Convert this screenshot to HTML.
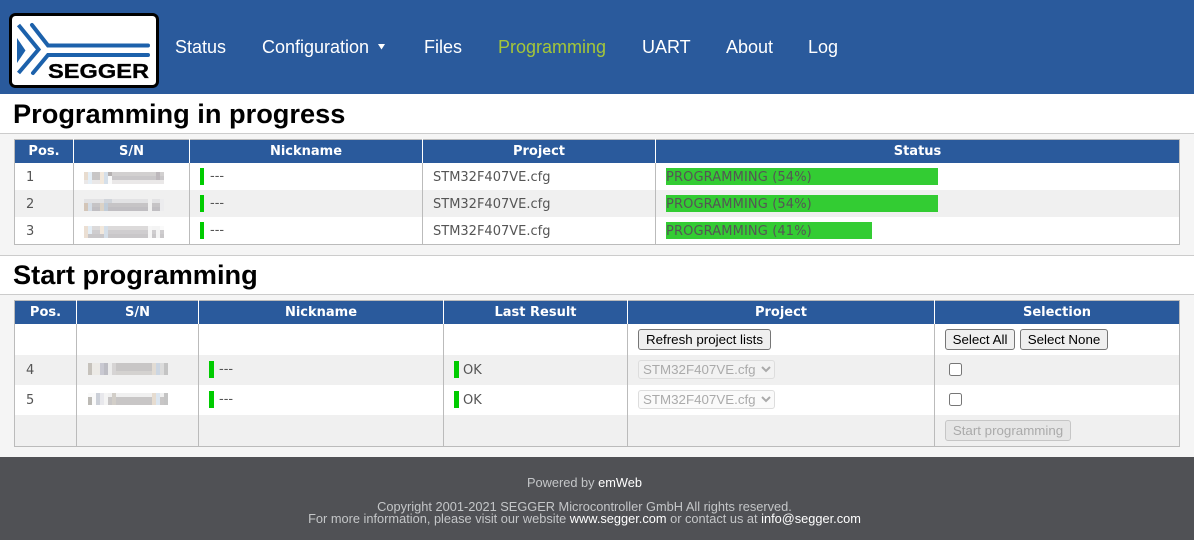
<!DOCTYPE html>
<html><head><meta charset="utf-8"><title>Programming</title>
<style>
html,body{margin:0;padding:0}
body{width:1194px;height:540px;position:relative;overflow:hidden;background:#f5f5f5;font-family:"Liberation Sans",sans-serif}
.a{position:absolute}
#hdr{left:0;top:0;width:1194px;height:94px;background:#2a5a9c}
.nav{position:absolute;top:37px;font-size:18px;line-height:20px;color:#fff;white-space:nowrap}
.band{position:absolute;left:0;width:1194px;background:#fff;border-bottom:1px solid #ccc;box-sizing:content-box}
h1{position:absolute;left:13px;margin:0;font-size:27.2px;line-height:32px;color:#000;font-weight:bold;white-space:nowrap}
table{position:absolute;left:14px;border-collapse:collapse;table-layout:fixed;font-family:"DejaVu Sans",sans-serif;font-size:13px;color:#555}
th{background:#2a5a9c;color:#fff;font-weight:bold;height:23px;padding:0;border:1px solid #fff;border-top-color:#bbb;border-bottom:none;text-align:center;font-size:13px;line-height:23px}
th:first-child{border-left-color:#bbb}th:last-child{border-right-color:#bbb}
td{padding:2px 0 0 11px;border-left:1px solid #bbb;border-right:1px solid #bbb;border-top:none;background:#fff;white-space:nowrap;position:relative;box-sizing:border-box}
.t2 td{padding-top:0}
tr.g td{background:#f0f0f0}
tr:last-child td{border-bottom:1px solid #bbb}
.t1 td{height:27px}
.bar{position:absolute;left:10px;top:5px;width:4px;height:17px;background:#00cc00}
.t2 .bar{width:5px;top:6px;height:17px}
.d{position:absolute;left:20px;top:0;line-height:27px}
.t2 .d{left:20px;line-height:29px}
.t2 .d.ok{top:1px;left:19px}
.pg{position:absolute;left:10px;top:5px;height:17px;background:#33cc33;line-height:17px;overflow:visible}
.pg span{position:absolute;left:0;top:1px;white-space:nowrap;letter-spacing:.12px}
.mos{position:absolute;left:10px;top:9px;width:80px;height:12px;display:block}
.t2 .mos{left:11px;top:8px}
button{position:absolute;font-family:"Liberation Sans",sans-serif;font-size:13.33px;background:#efefef;border:1px solid #767676;border-radius:3px;color:#000;padding:0;height:21px;line-height:18px;box-sizing:border-box;white-space:nowrap}
button[disabled]{background:#e6e6e6;border-color:#c6c6c6;color:#aaa}
select{position:absolute;left:10px;top:5px;width:137px;height:19px;font-family:"Liberation Sans",sans-serif;font-size:13.33px;box-sizing:border-box;padding:0;border:1px solid #ddd;border-radius:3px;color:#aaa;background:#fafafa;opacity:1}
tr.g select{background:#f2f2f2}
.cb{position:absolute;left:14px;top:8px;width:13px;height:13px;box-sizing:border-box;border:1px solid #767676;border-radius:2.5px;background:#fff}
#ft{left:0;top:457px;width:1194px;height:83px;background:#505155;font-size:12.8px;color:#c4c6c8}
#ft div{position:absolute;width:1169px;left:0;text-align:center;white-space:nowrap;line-height:12px}
#ft b{font-weight:normal;color:#fff}
</style></head><body>

<div id="hdr" class="a"></div>
<svg class="a" style="left:9px;top:12px" width="151" height="77" viewBox="9 12 151 77">
<rect x="10.5" y="14.5" width="147" height="72" rx="5" fill="#fff" stroke="#000" stroke-width="3"/>
<g fill="none" stroke="#1c61ab" stroke-width="4">
<path d="M18.5 25L38.5 49.5L18.5 73"/>
<path d="M32 25L48 45.5H148" stroke-linecap="round"/>
<path d="M33 73L48 55H148" stroke-linecap="round"/>
</g>
<path d="M17 38L25.5 50.5L17 63Z" fill="#1c61ab"/>
<text x="48" y="78" font-family="Liberation Sans" font-weight="bold" font-size="20.5" textLength="101" lengthAdjust="spacingAndGlyphs" fill="#000" stroke="#000" stroke-width=".3">SEGGER</text>
</svg>
<div class="nav" style="left:175px">Status</div>
<div class="nav" style="left:262px">Configuration</div>
<svg class="a" style="left:378px;top:44px" width="7" height="6"><path d="M0 0H7L3.5 5.5Z" fill="#fff"/></svg>
<div class="nav" style="left:424px">Files</div>
<div class="nav" style="left:498px;color:#a4c639">Programming</div>
<div class="nav" style="left:642px">UART</div>
<div class="nav" style="left:726px">About</div>
<div class="nav" style="left:808px">Log</div>

<div class="band" style="top:94px;height:39px"></div>
<h1 style="top:98px">Programming in progress</h1>
<div class="band" style="top:255px;height:38px;border-top:1px solid #ccc"></div>
<h1 style="top:259px">Start programming</h1>

<table class="t1" style="top:139px;width:1165px">
<colgroup><col style="width:59px"><col style="width:116px"><col style="width:233px"><col style="width:233px"><col style="width:524px"></colgroup>
<tr><th>Pos.</th><th>S/N</th><th>Nickname</th><th>Project</th><th>Status</th></tr>
<tr><td>1</td><td><svg class="mos" viewBox="0 0 20 3" preserveAspectRatio="none" shape-rendering="crispEdges"><rect width="20" height="1" fill="#d2d0d0"/><rect y="1" width="20" height="1" fill="#c9c7c9"/><rect y="2" width="20" height="1" fill="#eae8e8"/><rect width="1" height="2" fill="#e8dccf"/><rect x="1" width="1" height="3" fill="#e4eef6"/><rect x="2" width="2" height="2" fill="#c8c6c6"/><rect x="4" width="1" height="3" fill="#f2e8dc"/><rect x="5" width="1" height="3" fill="#d5dfe9"/><rect x="6" width="1" height="1" fill="#b5b1b1"/><rect x="6" y="1" width="1" height="2" fill="#fafafa"/><rect x="18" width="1" height="2" fill="#bdb8bc"/></svg></td><td><i class="bar"></i><span class="d">---</span></td><td style="padding-left:10px">STM32F407VE.cfg</td><td><div class="pg" style="width:272px"><span>PROGRAMMING (54%)</span></div></td></tr>
<tr class="g"><td>2</td><td><svg class="mos" viewBox="0 0 20 3" preserveAspectRatio="none" shape-rendering="crispEdges"><rect width="20" height="1" fill="#e2e2e4"/><rect y="1" width="20" height="1" fill="#c6c4c6"/><rect y="2" width="20" height="1" fill="#c0bec2"/><rect y="1" width="1" height="2" fill="#d3c5b8"/><rect x="1" y="1" width="1" height="2" fill="#d5dde6"/><rect x="4" y="1" width="1" height="2" fill="#dbd2c6"/><rect x="5" y="1" width="1" height="2" fill="#c0ccd8"/><rect x="5" width="2" height="1" fill="#d0d4da"/><rect x="16" width="1" height="3" fill="#f0f0f0"/><rect x="19" width="1" height="3" fill="#ececee"/></svg></td><td><i class="bar"></i><span class="d">---</span></td><td style="padding-left:10px">STM32F407VE.cfg</td><td><div class="pg" style="width:272px"><span>PROGRAMMING (54%)</span></div></td></tr>
<tr><td>3</td><td><svg class="mos" viewBox="0 0 20 3" preserveAspectRatio="none" shape-rendering="crispEdges"><rect width="20" height="1" fill="#dcdada"/><rect y="1" width="20" height="1" fill="#cfcdcf"/><rect y="2" width="20" height="1" fill="#c9c7c9"/><rect width="1" height="3" fill="#ebdfd3"/><rect x="1" width="1" height="2" fill="#e4eef6"/><rect x="4" width="1" height="2" fill="#f2e8dc"/><rect x="5" width="1" height="3" fill="#d5dfe9"/><rect x="16" width="1" height="3" fill="#f6f6f6"/><rect x="18" width="1" height="3" fill="#f4f4f4"/><rect x="17" width="1" height="1" fill="#f4f4f4"/><rect x="19" width="1" height="1" fill="#fafafa"/></svg></td><td><i class="bar"></i><span class="d">---</span></td><td style="padding-left:10px">STM32F407VE.cfg</td><td><div class="pg" style="width:206px"><span>PROGRAMMING (41%)</span></div></td></tr>
</table>

<table class="t2" style="top:300px;width:1165px">
<colgroup><col style="width:62px"><col style="width:122px"><col style="width:245px"><col style="width:184px"><col style="width:307px"><col style="width:245px"></colgroup>
<tr><th>Pos.</th><th>S/N</th><th>Nickname</th><th>Last Result</th><th>Project</th><th>Selection</th></tr>
<tr style="height:31px"><td style="height:31px"></td><td></td><td></td><td></td><td><button style="left:10px;top:5px;width:133px">Refresh project lists</button></td><td><button style="left:10px;top:5px;width:70px">Select All</button><button style="left:85px;top:5px;width:88px">Select None</button></td></tr>
<tr class="g"><td style="height:30px">4</td><td><svg class="mos" viewBox="0 0 20 3" preserveAspectRatio="none" shape-rendering="crispEdges"><rect width="20" height="3" fill="#c8c6c6"/><rect width="1" height="3" fill="#c6c2bc"/><rect x="1" width="2" height="3" fill="#eceae6"/><rect x="3" width="1" height="3" fill="#c9c9d2"/><rect x="5" width="1" height="3" fill="#ececec"/><rect x="4" width="1" height="3" fill="#bdbdc4"/><rect x="6" width="1" height="3" fill="#d6d4d4"/><rect x="7" y="2" width="11" height="1" fill="#d4d2d0"/><rect x="16" width="1" height="3" fill="#e2dcd4"/><rect x="17" width="1" height="3" fill="#ccd6e2"/><rect x="18" width="1" height="3" fill="#dcdcdc"/><rect x="19" width="1" height="3" fill="#c4c4c4"/></svg></td><td style="padding-left:10px"><i class="bar"></i><span class="d">---</span></td><td><i class="bar"></i><span class="d ok">OK</span></td><td><select disabled><option>STM32F407VE.cfg</option></select></td><td><i class="cb"></i></td></tr>
<tr><td style="height:30px">5</td><td><svg class="mos" viewBox="0 0 20 3" preserveAspectRatio="none" shape-rendering="crispEdges"><rect width="20" height="1" fill="#f0f0f0"/><rect y="1" width="20" height="2" fill="#c8c6c6"/><rect width="1" height="1" fill="#fafafa"/><rect y="1" width="1" height="2" fill="#bcbab5"/><rect x="1" width="1" height="3" fill="#fafafa"/><rect x="2" y="0" width="1" height="3" fill="#ccd0d8"/><rect x="3" width="1" height="3" fill="#e8e8ec"/><rect x="4" width="1" height="3" fill="#f4f4f4"/><rect x="6" y="0" width="1" height="3" fill="#d2cec8"/><rect x="16" width="1" height="3" fill="#e6dcd0"/><rect x="17" width="1" height="3" fill="#dce6f0"/><rect x="19" y="0" width="1" height="3" fill="#c4c4c4"/></svg></td><td style="padding-left:10px"><i class="bar"></i><span class="d">---</span></td><td><i class="bar"></i><span class="d ok">OK</span></td><td><select disabled><option>STM32F407VE.cfg</option></select></td><td><i class="cb"></i></td></tr>
<tr class="g"><td style="height:31px"></td><td></td><td></td><td></td><td></td><td><button disabled style="left:10px;top:5px;width:126px">Start programming</button></td></tr>
</table>

<div id="ft" class="a">
<div style="top:20px">Powered by <b>emWeb</b></div>
<div style="top:44px">Copyright 2001-2021 SEGGER Microcontroller GmbH All rights reserved.</div>
<div style="top:56px">For more information, please visit our website <b>www.segger.com</b> or contact us at <b>info@segger.com</b></div>
</div>
</body></html>
